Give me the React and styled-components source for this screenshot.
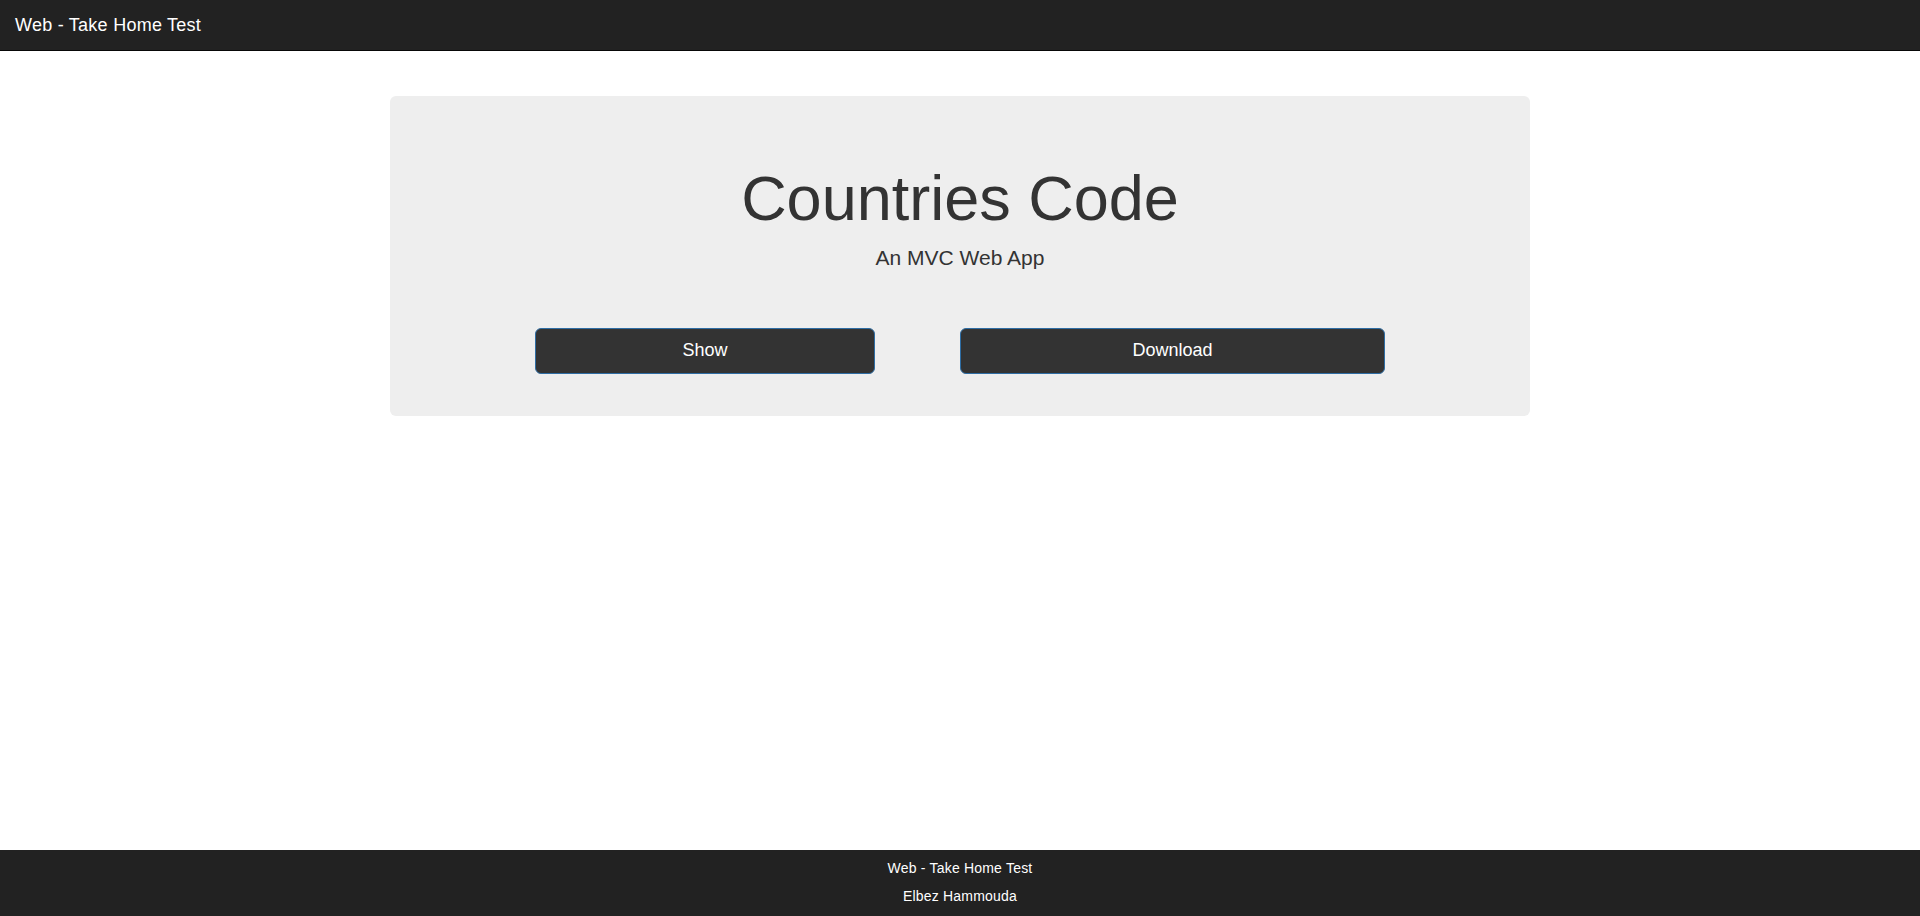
import React from "react"
import styled, { createGlobalStyle } from "styled-components"

const GlobalStyle = createGlobalStyle`
  * {
    box-sizing: border-box;
  }
  body {
    margin: 0;
    font-family: "Liberation Sans", Arial, Helvetica, sans-serif;
    font-size: 14px;
    line-height: 1.42857;
    color: #333;
    background: #fff;
  }
`

const Page = styled.div`
  min-height: 100vh;
  display: flex;
  flex-direction: column;
`

const Navbar = styled.header`
  height: 51px;
  background: #222;
  border-bottom: 1px solid #080808;
  display: flex;
  align-items: flex-start;
`

const Brand = styled.a`
  padding: 15px;
  font-size: 18px;
  line-height: 20px;
  letter-spacing: 0.25px;
  color: #fff;
  text-decoration: none;
`

const Container = styled.main`
  flex: 1;
  width: 1170px;
  margin: 0 auto;
  padding: 45px 15px 0;
`

const Jumbotron = styled.section`
  background: #eee;
  border-radius: 6px;
  padding: 48px 60px 42px;
  text-align: center;
`

const Title = styled.h1`
  margin: 20px 0 10px;
  font-size: 63px;
  font-weight: 400;
  line-height: 1.1;
  color: #333;
`

const Lead = styled.p`
  margin: 0;
  font-size: 21px;
  font-weight: 400;
  line-height: 1.42857;
  color: #333;
`

const Actions = styled.div`
  display: flex;
  gap: 85px;
  padding: 0 85px;
  margin-top: 55px;
`

const Button = styled.button`
  width: ${props => props.width}px;
  height: 46px;
  padding: 10px 16px;
  font-family: inherit;
  font-size: 18px;
  line-height: 1.3333;
  color: #fff;
  background: #333;
  border: 1px solid #2e6da4;
  border-radius: 6px;
  cursor: pointer;
`

const Footer = styled.footer`
  background: #222;
  color: #fff;
  text-align: center;
  padding: 8px 0 10px;
`

const FooterLine = styled.p`
  margin: 0;
  font-size: 14px;
  line-height: 20px;
  letter-spacing: 0.2px;
  & + & {
    margin-top: 8px;
  }
`

const App = () => {
  return (
    <Page>
      <GlobalStyle />
      <Navbar>
        <Brand href="#">Web - Take Home Test</Brand>
      </Navbar>
      <Container>
        <Jumbotron>
          <Title>Countries Code</Title>
          <Lead>An MVC Web App</Lead>
          <Actions>
            <Button width={340}>Show</Button>
            <Button width={425}>Download</Button>
          </Actions>
        </Jumbotron>
      </Container>
      <Footer>
        <FooterLine>Web - Take Home Test</FooterLine>
        <FooterLine>Elbez Hammouda</FooterLine>
      </Footer>
    </Page>
  )
}

export default App
